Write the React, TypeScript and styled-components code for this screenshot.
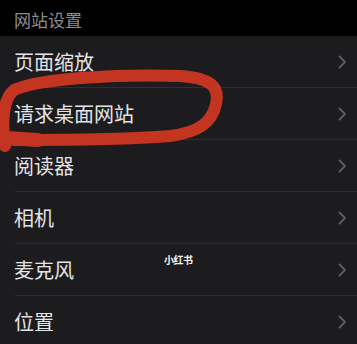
import React from "react";
import styled, { createGlobalStyle } from "styled-components";

const Global = createGlobalStyle`
  html, body { margin: 0; padding: 0; background: #1c1c1e; }
  body { font-family: "Noto Sans CJK SC", "Noto Sans", sans-serif; overflow: hidden; }
`;

const Page = styled.div`
  position: relative;
  width: 357px;
  height: 344px;
  overflow: hidden;
  background: #1c1c1e;
`;

const Header = styled.div`
  height: 36px;
  background: #000;
  display: flex;
  align-items: center;
  padding: 3px 0 0 14px;
  box-sizing: border-box;
  color: #8c8c8e;
  font-size: 17px;
  letter-spacing: 0px;
`;

const List = styled.div`
  display: flex;
  flex-direction: column;
`;

const Row = styled.div<{ $last?: boolean }>`
  position: relative;
  height: 52px;
  display: flex;
  align-items: center;
  justify-content: space-between;
  padding: 0 10px 0 14px;
  box-sizing: border-box;
  &::after {
    content: "";
    display: ${(p) => (p.$last ? "none" : "block")};
    position: absolute;
    left: 15px;
    right: 0;
    bottom: 0;
    height: 1px;
    background: #2f2f31;
  }
`;

const Label = styled.span`
  color: #e4e4e6;
  font-size: 20px;
  line-height: 1;
`;

const Chevron = styled.svg`
  width: 10px;
  height: 14px;
`;

const Annotation = styled.svg`
  position: absolute;
  left: 0;
  top: 0;
  pointer-events: none;
`;

const Watermark = styled.div`
  position: absolute;
  left: 164px;
  top: 252px;
  color: #f4f4f4;
  font-size: 10px;
  font-weight: 700;
  letter-spacing: -0.5px;
`;

const items = ["页面缩放", "请求桌面网站", "阅读器", "相机", "麦克风", "位置"];

export default function App() {
  return (
    <Page>
      <Global />
      <Header>网站设置</Header>
      <List>
        {items.map((t, i) => (
          <Row key={t} $last={i === items.length - 1}>
            <Label>{t}</Label>
            <Chevron viewBox="0 0 10 14">
              <path d="M2.5 1.5 L8 7 L2.5 12.5" fill="none" stroke="#5c5c5e" strokeWidth="2" strokeLinecap="round" strokeLinejoin="round" />
            </Chevron>
          </Row>
        ))}
      </List>
      <Annotation width="357" height="344" viewBox="0 0 357 344">
        <path
          d="M5 146 C 2 125, 2 100, 14 90 C 40 78, 120 74, 180 76 C 210 78, 220 86, 216 104 C 212 122, 200 132, 170 136 C 120 140, 60 140, 14 140"
          fill="none"
          stroke="#c33521"
          strokeWidth="12"
          strokeLinecap="round"
          strokeLinejoin="round"
        />
        <path d="M6 138 L 38 140" stroke="#c33521" strokeWidth="14" strokeLinecap="round" />
      </Annotation>
      <Watermark>小红书</Watermark>
    </Page>
  );
}
